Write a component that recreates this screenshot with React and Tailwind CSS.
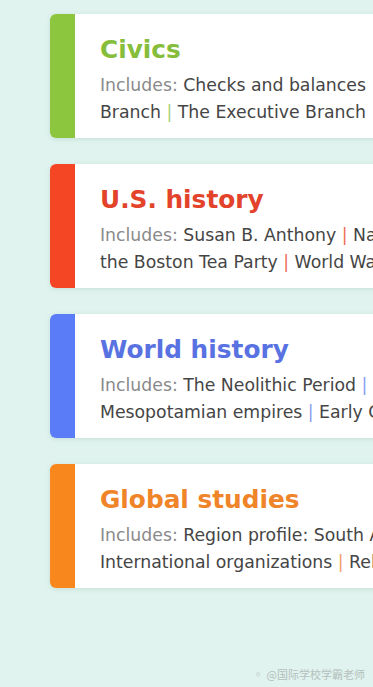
import React from 'react';

const subjects = [
  {
    title: 'Civics',
    stripe: 'bg-[#8cc63e]',
    titleColor: 'text-[#86bd3b]',
    sep: 'text-[#a9d27a]',
    lines: [
      ['Checks and balances', 'The Legislative'],
      ['Branch', 'The Executive Branch', 'The Judicial Branch'],
    ],
  },
  {
    title: 'U.S. history',
    stripe: 'bg-[#f44624]',
    titleColor: 'text-[#e2432a]',
    sep: 'text-[#ef6a52]',
    lines: [
      ['Susan B. Anthony', 'Native Americans and'],
      ['the Boston Tea Party', 'World War II'],
    ],
  },
  {
    title: 'World history',
    stripe: 'bg-[#5a7cf6]',
    titleColor: 'text-[#5872e2]',
    sep: 'text-[#8a9df0]',
    lines: [
      ['The Neolithic Period', 'Early'],
      ['Mesopotamian empires', 'Early China'],
    ],
  },
  {
    title: 'Global studies',
    stripe: 'bg-[#f8871e]',
    titleColor: 'text-[#ef8429]',
    sep: 'text-[#f2a163]',
    lines: [
      ['Region profile: South Asia', 'The'],
      ['International organizations', 'Religions of the world'],
    ],
  },
];

const SubjectCard = ({ subject }) => (
  <div className="flex w-[520px] h-[124px] rounded-[6px] bg-white shadow-[0_1px_4px_rgba(120,160,150,0.25)] overflow-hidden">
    <div className={`w-[25px] shrink-0 ${subject.stripe}`} />
    <div className="pl-[25px] pt-[20px]">
      <h2 className={`text-[24.8px] leading-[32px] font-bold ${subject.titleColor}`}>
        {subject.title}
      </h2>
      <div className="mt-[6px] text-[17.3px] leading-[27px] text-[#454545] whitespace-nowrap">
        {subject.lines.map((line, i) => (
          <div key={i}>
            {i === 0 && <span className="text-[#8a8a8a]">Includes: </span>}
            {line.map((item, j) => (
              <React.Fragment key={j}>
                {j > 0 && <span className={subject.sep}> | </span>}
                {item}
              </React.Fragment>
            ))}
          </div>
        ))}
      </div>
    </div>
  </div>
);

const App = () => {
  return (
    <div
      className="relative w-[373px] h-[687px] overflow-hidden bg-[#e0f3ee]"
      style={{ fontFamily: '"DejaVu Sans", Verdana, sans-serif' }}
    >
      <div className="flex flex-col gap-[26px] pl-[50px] pt-[14px]">
        {subjects.map((s) => (
          <SubjectCard key={s.title} subject={s} />
        ))}
      </div>
      {/* watermark */}
      <div
        className="absolute right-[8px] bottom-[5px] text-[11px] text-[#b5c0bd] flex items-center gap-[3px]"
        style={{ fontFamily: '"Noto Sans CJK SC", "DejaVu Sans", sans-serif' }}
      >
        <span>◦</span>
        <span>@国际学校学霸老师</span>
      </div>
    </div>
  );
};

export default App;
